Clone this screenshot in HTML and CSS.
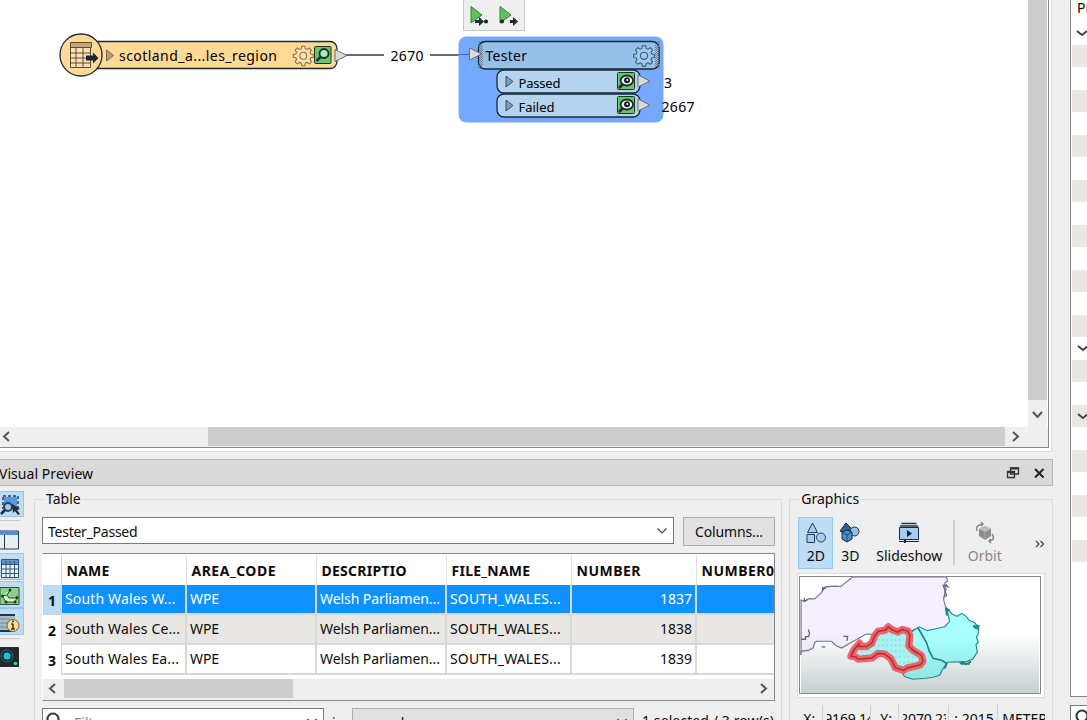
FILE: index.html
```html
<!DOCTYPE html>
<html lang="en"><head><meta charset="utf-8"><title>Visual Preview</title><link rel="stylesheet" href="styles.css"></head>
<body>
<svg class="defs" width="0" height="0"><defs>
<g id="gear"><path d="M-1.700-9.500h3.400l.5 2.700 1.900.8 2.300-1.600 2.400 2.400-1.600 2.300.8 1.900 2.700.5v3l-2.700.5-.8 1.900 1.600 2.300-2.400 2.400-2.300-1.600-1.900.8-.5 2.700h-3.400l-.5-2.700-1.900-.8-2.300 1.600-2.400-2.400 1.600-2.300-.8-1.900-2.700-.5v-3l2.700-.5.8-1.900-1.600-2.300 2.400-2.400 2.300 1.600 1.900-.8z" stroke-width="1.100"/><circle cy=".8" r="3.700" stroke-width="1.100"/></g>
<path id="port" d="M0-6 12 0 0 6z" fill="#d9dcdd" stroke="#6a6e70"/>
<path id="expand" d="M0-5.500 7 0 0 5.500z" stroke-width="1"/>
<g id="eye"><rect width="17" height="17" rx="1" fill="#68c764" stroke="#16352a"/><ellipse cx="9.300" cy="8" rx="6.200" ry="5" fill="#fff" stroke="#142b30" stroke-width="1.800"/><circle cx="9.500" cy="7.700" r="3" fill="#122126"/><circle cx="9.800" cy="7.400" r="1" fill="#fff"/><path d="m5 12-3.500 3.500" stroke="#142b30" stroke-width="2.500"/></g>
<pattern id="check" width="2" height="2" patternUnits="userSpaceOnUse"><path d="M0 0h1v1H0zM1 1h1v1H1z" fill="#777b80"/></pattern>
<pattern id="dots" width="13" height="17" patternUnits="userSpaceOnUse"><rect x="3" y="4" width="3" height="3" fill="#999ba0"/></pattern>
<linearGradient id="sky" x2="0" y2="1"><stop offset=".5" stop-color="#fff"/><stop offset="1" stop-color="#c6d0d0"/></linearGradient>
<linearGradient id="land" x2="0" y2="1"><stop offset=".7" stop-color="#f4f0ff"/><stop offset="1" stop-color="#ece9f6"/></linearGradient>
<linearGradient id="sea" x2="0" y2="1"><stop offset=".4" stop-color="#a8ffff"/><stop offset="1" stop-color="#91e5e3"/></linearGradient>
</defs></svg>
<div class="app">
<main class="main">
<section class="workspace">
 <div class="canvas-row">
 <svg class="canvas" width="1028" height="427" viewBox="0 0 1028 427">
  <path d="M345 55h39M430 55h40" stroke="#333b3f" stroke-width="1.300"/>
  <rect x="80" y="41.500" width="257" height="27" rx="7" fill="#ffd996" stroke="#1b2b31" stroke-width="1.300"/>
  <circle cx="81" cy="55" r="21" fill="#ffd996" stroke="#1b2b31" stroke-width="1.300"/>
  <path d="M70.500 43.500h20v24h-20z" fill="#ffe2b4" stroke="#5a4c39"/><path d="M70.500 42.500h21v5h-21z" fill="#c4a877" stroke="#5a4c39"/><path d="M70.500 53h20m-20 5h20m-20 5h20M76 48v19.500m7-19.500v19.500" stroke="#5a4c39"/>
  <path d="M86 55.500h7v-3l5.500 5.500-5.500 5.500v-3h-7z" fill="#1d2930"/>
  <use href="#expand" x="106.500" y="55.500" fill="#b2a176" stroke="#776746"/>
  <text x="119" y="61" textLength="158">scotland_a...les_region</text>
  <use href="#gear" transform="translate(303.300 55)scale(.93)" fill="#ffe0ad" stroke="#8a6e43"/>
  <rect x="314.500" y="46.500" width="16.500" height="17" rx="1" fill="#68c764" stroke="#16352a"/><circle cx="324" cy="53.500" r="4.500" fill="#a6f0a7" stroke="#142b30" stroke-width="1.800"/><path d="m320.500 57-4 4" stroke="#142b30" stroke-width="2.500"/>
  <use href="#port" x="335" y="55.500"/>
  <text x="390.500" y="61" textLength="33">2670</text>
  <path d="M463.500-1v31.500h61V-1" fill="#efefef" stroke="#c7c7c7"/>
  <path d="M471 6.500v16.500l11-8zM500 6.500v16.500l11-8z" fill="#5fc458" stroke="#3e7b42"/><path d="M475 20h4v-3l5 4.500-5 4.500v-3h-4zM510 20h3v-3l5 4.500-5 4.500v-3h-3z" fill="#1d2d33"/><circle cx="486" cy="21.500" r="2.100" fill="#1d2d33"/><circle cx="502" cy="21.500" r="2.100" fill="#1d2d33"/>
  <rect x="458.500" y="36.500" width="205" height="86" rx="8" fill="#75a9ff"/>
  <path d="M459 54.500h12" stroke="#42669c"/>
  <path d="M478 41h6v28h-6zM654 41h6v28h-6z" fill="url(#check)"/>
  <rect x="478.500" y="41.500" width="180.500" height="27.500" rx="7" fill="#97c0e8" stroke="#172a36" stroke-width="1.300"/>
  <path d="M479 45h4v21h-4zM655 45h4v21h-4z" fill="url(#check)"/>
  <use href="#port" x="469.500" y="54"/>
  <text x="485.500" y="61" textLength="41.500">Tester</text>
  <use href="#gear" transform="translate(644 55)scale(.97)" fill="#a1c7ec" stroke="#365c76"/>
  <g fill="#b5d2ef" stroke="#172a36" stroke-width="1.300"><rect x="497" y="70" width="143" height="23" rx="7"/><rect x="497" y="94" width="143" height="23" rx="7"/></g>
  <use href="#expand" x="506" y="81.500" fill="#819cb6" stroke="#3d5163"/><use href="#expand" x="506" y="105.500" fill="#819cb6" stroke="#3d5163"/>
  <g class="port-label"><text x="518.500" y="88" textLength="42">Passed</text><text x="518.500" y="112" textLength="36">Failed</text></g>
  <use href="#eye" x="617.500" y="72.500"/><use href="#eye" x="617.500" y="96.500"/><use href="#port" x="638" y="81"/><use href="#port" x="638" y="105"/>
  <text x="664" y="88">3</text><text x="661.500" y="112" textLength="33">2667</text>
 </svg>
 <div class="vscroll"><div class="vthumb"></div><svg width="19" height="27"><path d="m5 12 4.500 5 4.500-5" class="arrow"/></svg></div>
 </div>
 <div class="hscroll"><svg width="208" height="19"><path d="m9 5-5 4.500L9 14" class="arrow"/></svg><div class="hthumb"></div><svg width="23" height="19"><path d="m8 5 5 4.500L8 14" class="arrow"/></svg></div>
</section>
<header class="dock-title"><span>Visual Preview</span><svg width="51" height="24"><path d="M9.500 8h8v6h-8zM6.500 11.500h7v6h-7z" fill="#ddd" stroke="#333" stroke-width="1.300"/><path d="M9 8.500h9M6 12h8" stroke="#333" stroke-width="2"/><path d="m34 9 8.500 8.500m0-8.500-8.500 8.500" stroke="#222" stroke-width="2"/></svg></header>
<div class="preview">
 <nav class="tools">
  <div class="tool on first"><svg width="22" height="24"><path d="M4 5h13v10H4z" fill="#5599dd"/><path d="M3 4h15v12H3z" fill="none" stroke="#243b49" stroke-dasharray="3 2" stroke-width="1.500"/><circle cx="8" cy="15" r="4" fill="#9ccaf5" stroke="#33404b" stroke-width="2"/><path d="m5 18-4 4" stroke="#222d36" stroke-width="2.500"/><path d="m12 12 8 5-3 1 3 4-2 1-3-4-2 2z" fill="#222d36"/></svg></div>
  <i class="tool-sep"></i>
  <div class="tool plain"><svg width="20" height="20"><path d="M-1 1h19.500v18H-1z" fill="#e6f0f4" stroke="#263b47"/><path d="M0 1h18v4H0z" fill="#4f91d4"/><path d="M4.500 5v14" stroke="#263b47"/></svg></div>
  <div class="tool on"><svg width="22" height="25"><path d="M1.500 5.500h17v18h-17z" fill="#e8f2f9" stroke="#36546d"/><path d="M2 6h16v4H2z" fill="#5795d0"/><path d="M1 10.500h18M1 15h18M1 19.500h18M6 7v17m4-17v17m4.500-17v17" stroke="#36546d"/></svg></div>
  <div class="tool on next"><svg width="22" height="24"><path d="M0 5.500h19v17H0z" fill="#8fd08a" stroke="#265539"/><path d="m2 14 5-1 3-5M7 13l2 3h8l-2 4H6l-4-6" fill="#d9f0c8" stroke="#254b28"/><g fill="#253b25"><circle cx="2.500" cy="14" r="1.500"/><circle cx="10" cy="8" r="1.500"/><circle cx="17" cy="15.500" r="1.500"/><circle cx="6" cy="20" r="1.500"/><circle cx="15" cy="20" r="1.500"/></g></svg></div>
  <div class="tool on"><svg width="22" height="24"><path d="M0 6h15v15H0z" fill="#a6bdcc"/><path d="M0 6h15M0 22h14" stroke="#233641" stroke-width="2"/><path d="M0 10h10M0 14h8M0 18h9" stroke="#738897"/><circle cx="13" cy="16.500" r="6" fill="#ffdc8c" stroke="#765f3d"/><path d="M13 15v5m-2-5h2m-2 5h4M12 12.500h2" stroke="#3e3527" stroke-width="1.500"/></svg></div>
  <i class="tool-sep last"></i>
  <svg width="20" height="21"><rect x="-3" width="22" height="20" rx="1" fill="#22282c"/><circle cx="7" cy="9" r="6" fill="none" stroke="#087d8b"/><circle cx="7" cy="9" r="3.500" fill="#1bc4d6"/><circle cx="15.500" cy="16.500" r="1.800" fill="#26d5e2"/></svg>
 </nav>
 <fieldset class="group table-group"><legend>Table</legend>
  <div class="picker"><div class="combo"><span>Tester_Passed</span><svg width="19" height="20"><path d="m4.500 8.500 4.500 4.500 4.500-4.500" class="thin"/></svg></div><button class="columns">Columns...</button></div>
  <div class="table">
   <div class="row head"><b class="rh"></b><b>NAME</b><b class="wide">AREA_CODE</b><b>DESCRIPTIO</b><b>FILE_NAME</b><b class="wide">NUMBER</b><b class="wide">NUMBER0</b></div>
   <div class="row selected"><b class="rh">1</b><span class="name">South Wales W...</span><span>WPE</span><span>Welsh Parliamen...</span><span class="file">SOUTH_WALES...</span><span class="num">1837</span><span></span></div>
   <div class="row alt"><b class="rh">2</b><span class="name">South Wales Ce...</span><span>WPE</span><span>Welsh Parliamen...</span><span class="file">SOUTH_WALES...</span><span class="num">1838</span><span></span></div>
   <div class="row"><b class="rh">3</b><span class="name">South Wales Ea...</span><span>WPE</span><span>Welsh Parliamen...</span><span class="file">SOUTH_WALES...</span><span class="num">1839</span><span></span></div>
   <div class="table-scroll"><svg width="21" height="19"><path d="m12 5-5 4.500 5 4.500" class="arrow"/></svg><div></div><svg class="right" width="20" height="19"><path d="m7 5 5 4.500L7 14" class="arrow"/></svg></div>
  </div>
  <div class="filters"><div class="filter"><svg width="20" height="16"><circle cx="10" cy="7" r="5.500" class="lens"/></svg><span>Filter</span><svg width="20" height="20"><path d="m4.500 7 4.500 4.500L13.500 7" class="thin"/></svg></div><span class="in">in</span><div class="any"><span>any column</span><svg width="20" height="20"><path d="m4.500 6 4.500 4.500L13.500 6" class="thin"/></svg></div><span class="count">1 selected / 3 row(s)</span></div>
 </fieldset>
 <fieldset class="group graphics-group"><legend>Graphics</legend>
  <div class="views">
   <div class="view chosen"><svg width="24" height="24"><path d="m8.500 1 5 9.500h-10zM3 12.500h7.500V20.500H3z" fill="#a7cdf4" stroke="#233d52"/><circle cx="17" cy="15.500" r="4.500" fill="#a7cdf4" stroke="#233d52"/></svg><span class="d2">2D</span></div>
   <div class="view v3"><svg width="24" height="24"><path d="m8 1 7 7-6 4-7-3z" fill="#2d6290" stroke="#182d3c"/><circle cx="16.500" cy="9.500" r="4.500" fill="#94bfe6" stroke="#182d3c"/><path d="m4 10 5-2 5 2v7l-5 3-5-3z" fill="#4d8dca" stroke="#182d3c"/><path d="m4 10 5 3 5-3M9 13v7" stroke="#20496b" fill="none"/></svg><span>3D</span></div>
   <div class="view slides"><svg width="24" height="24"><path d="M4.500 1.500h15M3 4h18" stroke="#243844" stroke-width="1.300"/><path d="M2.500 5.500h19v12h-19z" fill="#a8cdf4" stroke="#172c38"/><path d="m10 8 5 3.500-5 3.500z" fill="#142733"/><path d="M2 19.500h20" stroke="#142733"/><path d="M7 18h2v3H7z" fill="#142733"/></svg><span>Slideshow</span></div>
   <i class="view-sep"></i>
   <div class="view orbit"><svg width="24" height="24"><path d="m6 7 6-3 6 3v7l-6 4-6-4z" fill="#8d8d8d"/><path d="m6 7 6 3 6-3-6-3z" fill="#bdbdbd"/><path d="M12 10v8" stroke="#aaa"/><path d="M4 9Q2 3 10 2M8 0l2 2-2 2M19 12q4 6-3 7m2-2-2 2 2 2" fill="none" stroke="#858585" stroke-width="1.500"/></svg><span>Orbit</span></div>
   <svg class="more" width="12" height="12"><path d="m2 3 3 3-3 3m4.500-6 3 3-3 3" class="thin"/></svg>
  </div>
  <div class="map"><svg width="242" height="118" viewBox="28 34 726 354"><path d="M28 34h726v354H28z" fill="url(#sky)"/>
  <path d="M28 104l12 4 12-8 18 1 18-17 14-20 30-2 18 1 17-14 18-15h287l3 13-8 4v15l4 5-4 10-4 21 6 23 7 7-2 16 9 13-3 18-12 11-18 5-30 1-8 5-12-7-25-1-23 15-40 5-85-5-50 28-25 15-18-8-13-13h-45l-6 3-5 17-15 8-19 2-18 10H28z" fill="url(#land)" stroke="#776f85" stroke-width="3.500"/>
  <path d="M28 224h13l1-8h9l3-10-4-12M91 247h11M157 215h13l-2 14M38 99v9l9-5M94 76v-9l11 1M469 56l7 8-14-5 10 32-9 4" fill="none" stroke="#69627a" stroke-width="4"/>
  <path d="M361 204l28-18 24 12 30-7 25-6 13-16-8-39 15 16 16 8 14-9 14 9 10 13 15 6 8 9h6l-3 29-5 5 6 18-7 6 4 23-14 21-20 9h-22l-36 1-15 24-8 16-20 6-22 3-40 3-25-8-20-28z" fill="url(#sea)" stroke="#218b8d" stroke-width="3.500"/><path d="m384 188 12 20 15 27 8 24 12 23 28 7 14 10-7 15M473 151l-3-20 13 5M512 298l11-5 8 8 16-9M553 184h14v8l-12-5M515 299h28" fill="none" stroke="#168587" stroke-width="5"/>
  <path d="m207 236-5 10h26l16-10 9-23 10-13 23-4 8-10 10 8 19 8 14-8 17 5 6 13-3 33 14 14 24 14 5 18-8 11-16 4-25 6-10 7-25-8-14-28-19-14-20-2-18 14-42 4-8-7-15-2 10-21z" fill="#a6f3f2" stroke="#f06369" stroke-width="22" stroke-linejoin="round"/><path d="m207 236-5 10h26l16-10 9-23 10-13 23-4 8-10 10 8 19 8 14-8 17 5 6 13-3 33 14 14 24 14 5 18-8 11-16 4-25 6-10 7-25-8-14-28-19-14-20-2-18 14-42 4-8-7-15-2 10-21z" fill="url(#dots)" stroke="#ae3439" stroke-width="5"/>
  </svg></div>
  <div class="coords"><span class="xlab">X:</span><span class="coord xval"><em>9169.14</em></span><span class="coord ylab">Y:</span><span class="coord yval"><em>2070.23</em></span><span class="coord level">; 2015</span><span class="coord unit">METER</span></div>
 </fieldset>
</div>
</main>
<aside class="side"><div class="params"><div class="param-title">Pr</div><div class="fold"><svg width="18" height="23"><path d="m7 11 5 4 5-4" class="fold-arrow"/></svg></div><div class="stripes"><div class="fold six"><svg width="18" height="23"><path d="m7 9 5 4 5-4" class="fold-arrow"/></svg></div><div class="fold eight"><svg width="18" height="23"><path d="m7 9 5 4 5-4" class="fold-arrow"/></svg></div></div></div><div class="side-search"><svg width="18" height="16"><circle cx="11" cy="10" r="5.500" class="lens"/></svg></div></aside>
</div></body></html>
```
FILE: styles.css
```css
* { box-sizing: border-box; }
body { margin: 0; overflow: hidden; background: #efefef; color: #0b0b0b; font: 14px/20px "Noto Sans", sans-serif; }
svg { display: block; flex: none; }
.defs { position: absolute; width: 0; height: 0; }
.app { display: flex; justify-content: space-between; height: 720px; overflow: hidden; }
.main { width: 1053px; display: flex; flex-direction: column; }
.workspace { width: 1052px; height: 452px; padding: 0 2px 3px 0; border-right: 1px solid #d9d9d9; border-bottom: 1px solid #d9d9d9; background: #fff; }
.canvas-row { display: flex; width: 1049px; height: 427px; border-right: 1px solid #828790; }
.canvas { background: #fff; font-size: 14px; }
.port-label { font-size: 13px; }
.vscroll { width: 19px; background: #efefef; }
.vthumb { height: 400px; background: #cdcdcd; }
.arrow { fill: none; stroke: #555; stroke-width: 2; }
.thin { fill: none; stroke: #444; stroke-width: 1.2; }
.hscroll { display: flex; width: 1049px; height: 21px; background: #efefef; border-right: 1px solid #828790; border-bottom: 1px solid #828790; }
.hthumb { width: 797px; height: 19px; background: #cdcdcd; }
.dock-title { display: flex; justify-content: space-between; height: 27px; margin-top: 7px; padding-top: 4px; border: 1px solid #b5b5b5; border-left: 0; background: #dadada; letter-spacing: .05px; }
.dock-title span { margin-left: -1px; }
.dock-title svg { margin-top: -4px; }
.preview { display: flex; height: 234px; }
.tools { width: 34px; padding-top: 5px; flex: none; }
.tool { width: 24px; height: 27px; border: 1px solid transparent; border-left: 0; overflow: hidden; }
.on { background: #c0dcf3; border-color: #90c8f6; }
.first { height: 26px; }
.plain { height: 24px; }
.next { margin: 1px 0 0; }
.tool-sep { display: block; width: 20px; height: 1px; background: #c8c8c8; margin: 3px 0 8px; }
.group { min-width: 0; margin: 3px 0 0; padding: 0; border: 1px solid #dcdcdc; border-bottom: 0; height: 260px; }
.group legend { margin-left: 9px; padding: 0 2px; height: 20px; }
.table-group { width: 749px; }
.table-group > div { margin-left: 7px; }
.picker { display: flex; gap: 9px; padding-top: 8px; height: 44px; }
.combo { display: flex; justify-content: space-between; width: 632px; height: 27px; padding: 3px 1px 0 5px; border: 1px solid #7a7a7a; background: #fff; letter-spacing: -.25px; }
.combo span { padding-top: 1px; }
.combo svg { margin-top: -1px; }
.columns { width: 92px; height: 29px; padding: 0; color: inherit; font: inherit; letter-spacing: -.15px; background: #e1e1e1; border: 1px solid #adadad; }
.table { width: 733px; height: 148px; overflow: hidden; padding-top: 1px; border: 1px solid #828790; border-left-color: #fff; background: #fff; }
.row { display: grid; grid-template-columns: 19px 125px 130px 130px 125px 125px 125px; height: 30px; white-space: nowrap; }
.row > span, .row > b { overflow: hidden; }
.row > span { border-right: 2px solid #d8d8d8; border-bottom: 2px solid #d8d8d8; padding: 4px 3px; letter-spacing: -.08px; }
.row > .name { letter-spacing: .15px; }
.row > .file { letter-spacing: .15px; }
.head > b { padding: 6px 4.5px; border-right: 1px solid #e2e2e2; letter-spacing: .25px; }
.head > .wide { letter-spacing: .5px; }
.row > .rh { padding: 6px 5px; border-right: 1px solid #d8d8d8; }
.selected > span { background: #0f91ff; color: #fff; }
.selected .rh { background: #b9dcf4; }
.alt > span { background: #e8e7e4; }
.row > .num { text-align: right; letter-spacing: 0; }
.table-scroll { display: flex; height: 21px; margin-top: 4px; background: #efefef; }
.table-scroll div { width: 229px; height: 19px; background: #cdcdcd; }
.table-scroll .right { margin-left: auto; }
.filters { display: flex; padding-top: 7px; white-space: nowrap; }
.filter { display: flex; width: 282px; height: 28px; padding-top: 3px; border: 1px solid #7a7a7a; background: #fff; color: #888; }
.filter span { margin: 1px 0 0 11px; flex: 1; }
.in { width: 28px; padding: 5px 0 0 8px; }
.any { display: flex; justify-content: space-between; width: 282px; height: 28px; padding: 4px 0 0 7px; border: 1px solid #adadad; background: #e1e1e1; letter-spacing: -.3px; }
.count { padding: 3px 0 0 8px; letter-spacing: .1px; }
.graphics-group { width: 264px; margin-left: 7px; }
.views { display: flex; align-items: flex-start; height: 65px; margin: 8px 0 0 8px; }
.view { display: flex; flex-direction: column; align-items: center; height: 52px; padding-top: 4px; border: 1px solid transparent; white-space: nowrap; }
.chosen { width: 35px; background: #c0dcf3; border-color: #90c8f6; }
.v3 { width: 34px; }
.slides { width: 84px; }
.view-sep { width: 2px; height: 45px; margin: 3px 0 0 2px; background: #d2d2d2; }
.orbit { width: 59px; color: #888; }
.more { margin: 21px 0 0 20px; }
.map { width: 248px; height: 125px; margin: -9px 0 0 7px; padding: 2px 2px 2px 1px; border: 1px solid #dcdcdc; background: #fff; }
.map svg { border: 1px solid #828790; }
.coords { display: flex; height: 24px; margin: 7px 0 0 13px; white-space: nowrap; overflow: hidden; }
.coord, .xlab { padding-top: 4px; overflow: hidden; }
.coord { border-left: 1px solid #d0d0d0; }
.xlab { width: 19px; }
.xval { width: 48px; padding-left: 4px; }
.coord em { display: block; width: 43px; overflow: hidden; font-style: normal; text-indent: -3px; letter-spacing: -.2px; }
.ylab { width: 28px; padding-left: 9px; }
.yval { width: 50px; padding-left: 4px; }
.level { width: 49px; padding-left: 5px; }
.unit { width: 48px; padding-left: 4px; letter-spacing: 0; }
.side { width: 17px; flex: none; }
.params { height: 697px; border-left: 1px solid #828790; border-bottom: 1px solid #828790; background: #fff; overflow: hidden; }
.param-title { height: 22px; padding: 0 0 0 6px; margin-top: -2px; }
.fold { height: 25px; }
.fold-arrow { fill: none; stroke: #444; stroke-width: 2; transform: translateX(-1px); }
.stripes { display: flex; flex-direction: column; height: 517px; margin-left: 1px; background: repeating-linear-gradient(#e8e7e3 0 22px, #fff 22px 45px); }
.six { margin-top: 292px; height: 23px; }
.eight { margin-top: 45px; height: 23px; }
.side-search { height: 30px; margin-top: 8px; border: 1px solid #777; border-right: 0; background: #fff; }
.lens { fill: none; stroke: #25343f; stroke-width: 2; }
```
